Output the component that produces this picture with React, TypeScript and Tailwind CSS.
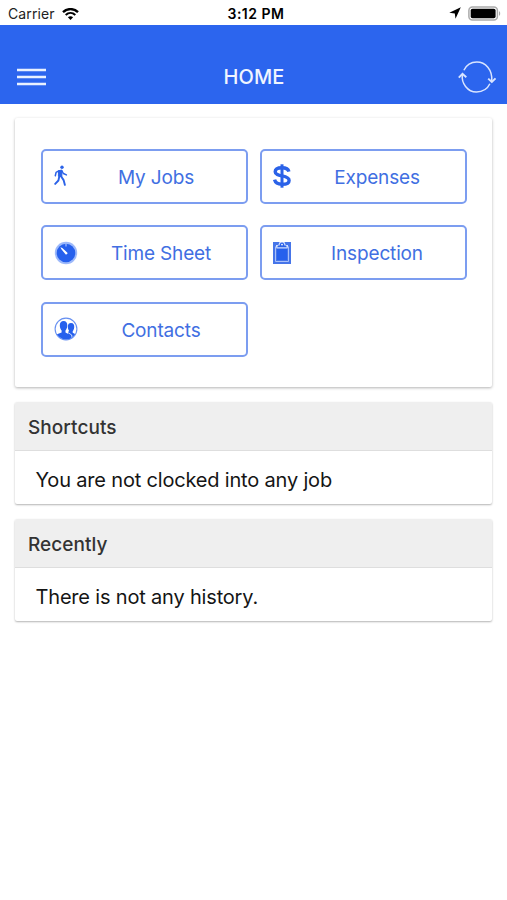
import type { ReactNode } from "react";

function WalkIcon() {
  return (
    <svg width="14" height="24" viewBox="5 .5 14 24" fill="none" stroke="#2b62e8" strokeLinecap="round" strokeLinejoin="round">
      <circle cx="13" cy="3.8" r="1.7" fill="#2b62e8" stroke="none" />
      <path d="M9.9 7.1L13 6.6L12.8 13.2L9.8 12.8Z" fill="#2b62e8" strokeWidth="1" />
      <path d="M10.2 7.2L7.1 8.9L6.3 12.2M13 7.5L14.4 10L17.4 11.4" strokeWidth="1.5" />
      <path d="M10.4 12.5L9.4 17L6.2 20.4M12.2 13L14.6 16.6L15.9 21.4" strokeWidth="1.9" />
    </svg>
  );
}

function DollarIcon() {
  return (
    <svg width="18" height="24" viewBox="3 0 18 24" fill="none" stroke="#2b62e8">
      <path d="M12 .3V23.7" strokeWidth="3" />
      <path d="M18.9 7.6C18.2 4.9 15.5 3.8 12 3.8C8 3.8 5.2 5.3 5.2 7.7C5.2 10.6 8.5 11.2 12 11.9C16 12.7 19.1 13.5 19.1 16.4C19.1 19 16 20.3 12 20.3C8 20.3 5.3 18.8 4.6 15.7" strokeWidth="3.4" />
    </svg>
  );
}

function TimerIcon() {
  return (
    <svg width="24" height="24" viewBox="0 0 24 24">
      <circle cx="12" cy="12" r="11.2" fill="#9db9fa" />
      <circle cx="12" cy="12" r="9.3" fill="#2660ed" />
      <path d="M12 1V5.5" stroke="#9db9fa" strokeWidth="1.3" />
      <path d="M6.4 6.2L8.3 7L13.4 11.7A1.3 1.3 0 0 1 11.7 13.4L7.4 8.2Z" fill="#fff" />
    </svg>
  );
}

function ClipboardIcon() {
  return (
    <svg width="18" height="24" viewBox="3 0 18 24" fill="none">
      <path d="M3 1H21V23H3Z" fill="#4675e9" />
      <path d="M5.5 5.5V20.5H18.5V5.5" stroke="#a9c0fa" strokeWidth="1" />
      <path d="M7 7H17V19H7Z" fill="#2660ed" />
      <path d="M6 6V4H8.3L9.5 1H14.5L15.7 4H18V6L17.4 7.4H6.6Z" fill="#d3dffd" />
      <path d="M7.2 6.2L8 4.6H9.6C9.8 2.6 10.6 1.5 12 1.5S14.2 2.6 14.4 4.6H16L16.8 6.2Z" fill="#2b62e8" />
      <circle cx="12" cy="3.6" r=".9" fill="#fff" />
    </svg>
  );
}

function ContactsIcon() {
  return (
    <svg width="24" height="24" viewBox="0 0 24 24">
      <defs>
        <clipPath id="people">
          <circle cx="12" cy="12" r="10.7" />
        </clipPath>
      </defs>
      <g clipPath="url(#people)" fill="#2660ed">
        <path d="M17 6C19.5 6 20.5 8 20.2 10.4C20 12.3 19.2 13.5 18.7 14.2V15.8L23 18V23H14V15L15.2 14C14.2 12.8 13.7 11 13.8 9.3C13.9 7.2 15 6 17 6Z" />
        <path d="M9.6 4C12.5 4 13.6 6.2 13.2 9.2C13 11.3 12.3 12.6 11.5 13.5V15.6L15.4 17.6C17 18.5 17.6 20 17.6 23H0V18.5L7.6 15.6V13.5C6.5 12.3 5.8 10.5 5.8 8.5C5.8 5.6 7.1 4 9.6 4Z" />
        <path d="M13.8 15.5L17.7 18L18.2 22" fill="none" stroke="#fff" strokeWidth=".8" />
      </g>
      <circle cx="12" cy="12" r="10.9" fill="none" stroke="#6790f1" strokeWidth="1.1" />
    </svg>
  );
}

function MenuButton({ icon, label }: { icon: ReactNode; label: string }) {
  return (
    <button className="flex h-[55px] items-center rounded-[5px] border-2 border-[#7c9df0] bg-white pl-[11px] text-[#416fe2]">
      {icon}
      <span className="flex-1 pl-[5px] pr-[7px] pt-[3px] text-center text-[19px] leading-6 tracking-[-0.15px]">{label}</span>
    </button>
  );
}

function Panel({ title, text }: { title: string; text: string }) {
  return (
    <section className="mt-[15px] h-[102px] overflow-hidden rounded-[2px] bg-white shadow-[0_1px_2px_rgba(0,0,0,0.3)]">
      <h2 className="flex h-[49px] items-center border-b border-[#dedede] bg-[#efefef] pl-[13px] pt-[4px] text-[19px] font-medium tracking-[0.05px] text-[#333]">
        {title}
      </h2>
      <p className="pl-[20.5px] pt-[14px] text-[20px] leading-[30px] tracking-[-0.18px] text-[#151515]">{text}</p>
    </section>
  );
}

export default function App() {
  return (
    <div className="min-h-[900px] w-full bg-white font-['Inter','Liberation_Sans',sans-serif]">
      <div className="grid h-[25px] grid-cols-3 items-center text-black">
        <div className="flex items-center gap-[7px] pl-[8px] pt-[2px]">
          <span className="text-[14px] leading-5 tracking-[0.1px] text-[#222]">Carrier</span>
          <svg width="17" height="12" viewBox="0 0 17 12" fill="none" stroke="#000">
            <path d="M1 4.1C5.2.1 11.8.1 16 4.1" strokeWidth="2.4" />
            <path d="M3.7 7C6.5 4.4 10.5 4.4 13.3 7" strokeWidth="2.1" />
            <path d="M8.5 12L5.9 9.3C7.4 7.9 9.6 7.9 11.1 9.3Z" fill="#000" stroke="none" />
          </svg>
        </div>
        <div className="pl-[5px] pt-[2px] text-center text-[14px] font-semibold leading-5 tracking-[0.5px]">3:12 PM</div>
        <div className="flex items-center justify-end gap-[7px] pr-[6px] pt-[1px]">
          <svg width="12" height="12" viewBox="0 0 12 12">
            <path d="M11.8.2L6.5 11.8L5.8 6.4L.3 5.8Z" />
          </svg>
          <svg width="33" height="15" viewBox="0 0 33 15">
            <rect x=".9" y=".9" width="28.5" height="13.2" rx="3.5" fill="#fff" stroke="#aaa" strokeWidth="1.5" />
            <rect x="2.7" y="2.7" width="24.9" height="9.6" rx="1.8" />
            <path d="M31 5.2C32.6 5.6 32.6 9.4 31 9.8Z" fill="#aaa" />
          </svg>
        </div>
      </div>

      <header className="grid h-[79px] grid-cols-3 items-center bg-[#2c65ee] pt-[25px]">
        <button className="ml-[17px] w-[29px]" aria-label="Menu">
          <svg className="block" width="29" height="18" viewBox="0 0 29 18" stroke="#e9f1ff" strokeWidth="2.5">
            <path d="M0 2H29M0 9H29M0 16H29" />
          </svg>
        </button>
        <h1 className="pl-[1px] text-center text-[20px] font-medium tracking-[0.1px] text-[#f0f5ff]">HOME</h1>
        <button className="mr-[11px] justify-self-end" aria-label="Refresh">
          <svg width="38" height="34" viewBox="0 0 38 34" fill="none" stroke="#d8e4ff" strokeWidth="1.5">
            <path d="M4.5 14.5C3 23 9.5 32 18.5 32C24.5 32 29.5 28.8 31.9 23.8M5.9 10.2C8.3 5.2 13 2 18.8 2C27.5 2 34.5 9.5 33.8 21" />
            <path d="M.8 17.6L4.5 13.8L8.3 17.2M30.2 18.6L33.8 22L37.5 18.3" strokeWidth="1.9" />
          </svg>
        </button>
      </header>

      <main className="px-[15px] pt-[14px]">
        <section className="grid h-[269px] grid-cols-2 content-start gap-x-[12px] gap-y-[21.5px] rounded-[2px] bg-white px-[26px] pr-[25px] pt-[30.5px] shadow-[0_1px_3px_rgba(0,0,0,0.3)]">
          <MenuButton icon={<WalkIcon />} label="My Jobs" />
          <MenuButton icon={<DollarIcon />} label="Expenses" />
          <MenuButton icon={<TimerIcon />} label="Time Sheet" />
          <MenuButton icon={<ClipboardIcon />} label="Inspection" />
          <MenuButton icon={<ContactsIcon />} label="Contacts" />
        </section>
        <Panel title="Shortcuts" text="You are not clocked into any job" />
        <Panel title="Recently" text="There is not any history." />
      </main>
    </div>
  );
}
